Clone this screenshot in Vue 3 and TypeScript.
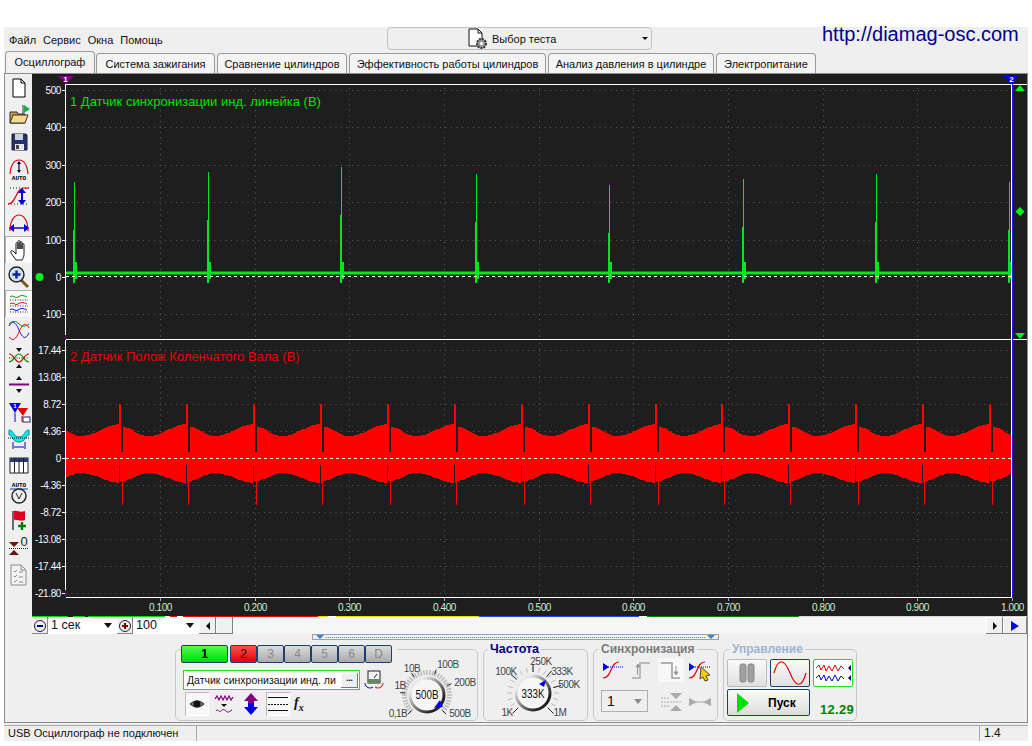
<template>
  <div class="window">
    <!-- верхняя строка -->
    <div class="top">
      <div class="menu">
        <span>Файл</span><span>Сервис</span><span>Окна</span><span>Помощь</span>
      </div>
      <div class="test-select">
        <svg class="doc-gear" width="22" height="22" viewBox="0 0 22 22">
          <path d="M2 1h9l4 4v13H2z" fill="#fff" stroke="#111" />
          <path d="M11 1v4h4" fill="none" stroke="#111" />
          <circle cx="14.5" cy="15.5" r="4.5" fill="#9a9a9a" stroke="#333" stroke-dasharray="2 1" stroke-width="2" />
          <circle cx="14.5" cy="15.5" r="1.6" fill="#fff" />
        </svg>
        <span>Выбор теста</span>
        <i class="arrow-down small"></i>
      </div>
      <a class="site">http://diamag-osc.com</a>
    </div>

    <!-- вкладки -->
    <div class="tabs">
      <div v-for="(t, i) in tabs" :key="t.name" class="tab" :class="{ active: i === 0 }" :style="{ width: t.w + 'px' }">
        {{ t.name }}
      </div>
    </div>

    <div class="main">
      <!-- левая панель -->
      <div class="toolbar">
        <div class="tool">
          <svg viewBox="0 0 24 24"><path d="M6 3h8l4 4v14H6z" fill="#fff" stroke="#000" /><path d="M14 3v4h4" fill="none" stroke="#000" /></svg>
        </div>
        <div class="tool">
          <svg viewBox="0 0 24 24">
            <path d="M3 9h7l1 2h7v9H3z" fill="#c8a040" stroke="#333" />
            <path d="M3 20l3-8h15l-3 8z" fill="#f4d98a" stroke="#333" />
            <path d="M16 11V2" stroke="#333" /><path d="M17 2l6 4-6 4z" fill="#16b04a" />
          </svg>
        </div>
        <div class="tool">
          <svg viewBox="0 0 24 24">
            <path d="M5 4h14l1 1v15H5z" fill="#27306e" stroke="#222" />
            <rect x="8" y="4" width="8" height="6" fill="#cfd3e0" />
            <rect x="8" y="14" width="9" height="6" fill="#e6e6e6" /><rect x="9" y="15" width="3" height="4" fill="#444" />
          </svg>
        </div>
        <div class="tool">
          <svg viewBox="0 0 24 24">
            <path d="M3 17C4 7 8 3 12 3s8 4 9 14" fill="none" stroke="#e00000" stroke-width="1.2" />
            <path d="M12 5v10" stroke="#000022" stroke-width="1.2" /><path d="M10 7l2-3 2 3zM10 13l2 3 2-3z" fill="#000030" />
            <text x="12" y="23" text-anchor="middle" class="icon-text">AUTO</text>
          </svg>
        </div>
        <div class="tool">
          <svg viewBox="0 0 24 24">
            <path d="M3 4h20M1 20h20" stroke="#222" stroke-dasharray="1 2" />
            <path d="M1 20c8 0 8-16 16-16h5" fill="none" stroke="#e00000" stroke-width="1.2" />
            <path d="M15 8v9" stroke="#0000d0" stroke-width="2" /><path d="M11 9l4-5 4 5zM11 16l4 5 4-5z" fill="#0000e0" />
          </svg>
        </div>
        <div class="tool">
          <svg viewBox="0 0 24 24">
            <path d="M3 20C3 10 7 4 12 4s9 6 9 16" fill="none" stroke="#e00000" stroke-width="1.2" />
            <path d="M5 17h14" stroke="#0000d0" stroke-width="1.5" /><path d="M7 13l-5 4 5 4zM17 13l5 4-5 4z" fill="#0000e0" />
          </svg>
        </div>
        <div class="tool on">
          <svg viewBox="0 0 24 24">
            <path d="M9 22l-5-7c-1-2 1-3 2-2l3 3V6c0-2 2-2 2 0v5V4c0-2 2-2 2 0v7-6c0-2 2-2 2 0v6-4c0-2 2-2 2 0v9c0 3-1 4-2 6z" fill="#fff" stroke="#000" stroke-width="0.900" />
          </svg>
        </div>
        <div class="tool">
          <svg viewBox="0 0 24 24">
            <path d="M14 15l7 7" stroke="#7a5a20" stroke-width="3" />
            <circle cx="9.5" cy="9.5" r="7.5" fill="#cfe2fa" stroke="#222" stroke-width="1.4" />
            <path d="M5.5 9.5h8M9.5 5.5v8" stroke="#1020a0" stroke-width="2.4" />
          </svg>
        </div>
        <div class="tool on">
          <svg viewBox="0 0 24 24" fill="none">
            <path d="M3 5c3-3 5 2 8 0s5-2 9 0" stroke="#00a000" />
            <path d="M3 8h18M3 14h18M3 20h18" stroke="#222" stroke-dasharray="1 1.5" />
            <path d="M3 12c3-3 5 2 8 0s5-2 9 0" stroke="#e00000" />
            <path d="M3 18c3-3 5 2 8 0s5-2 9 0" stroke="#0000e0" />
          </svg>
        </div>
        <div class="tool">
          <svg viewBox="0 0 24 24" fill="none">
            <path d="M2 7c4-7 7-3 10 4s6 11 10 3" stroke="#0000e0" />
            <path d="M2 18c4 5 7 2 10-5s6-11 10-4" stroke="#e00000" />
            <path d="M2 5c4-4 7-3 10 0s6 3 10 0" stroke="#009000" />
          </svg>
        </div>
        <div class="tool">
          <svg viewBox="0 0 24 24" fill="none">
            <path d="M9 2h6l-3 4zM9 22h6l-3-4z" fill="#111" />
            <path d="M2 12h20" stroke="#222" stroke-dasharray="1 1.5" />
            <path d="M2 8c5 0 6 8 10 8s5-8 10-8" stroke="#e00000" stroke-width="1.2" />
            <path d="M2 16c5 0 6-8 10-8s5 8 10 8" stroke="#009000" stroke-width="1.2" />
          </svg>
        </div>
        <div class="tool">
          <svg viewBox="0 0 24 24">
            <path d="M9 7h6l-3-4zM9 16h6l-3 4z" fill="#111" /><path d="M2 11.500h20" stroke="#800080" stroke-width="2" />
          </svg>
        </div>
        <div class="tool">
          <svg viewBox="0 0 24 24">
            <path d="M2 3h12l-6 10z" fill="#0000e0" /><path d="M8 13v9" stroke="#0000e0" />
            <path d="M10 8h11l-5 8z" fill="#e00000" /><path d="M15 16v6" stroke="#e00000" />
            <text x="8" y="8" text-anchor="middle" class="mini-num">1</text>
            <rect x="16" y="17" width="7" height="5" fill="#fff" stroke="#222080" />
          </svg>
        </div>
        <div class="tool">
          <svg viewBox="0 0 24 24" fill="none">
            <path d="M2 3c5 0 4 7 10 7s5-7 10-7v5c-4 0-3 7-10 7S6 8 2 8z" fill="#00f0f0" stroke="#009090" />
            <path d="M1 11h22" stroke="#111" stroke-dasharray="1 1" />
            <path d="M6 15v7M18 15v7" stroke="#0000c0" /><path d="M7 20h10" stroke="#0000c0" />
          </svg>
        </div>
        <div class="tool">
          <svg viewBox="0 0 24 24">
            <rect x="3" y="4" width="18" height="15" fill="#fff" stroke="#222" />
            <rect x="3" y="4" width="18" height="4" fill="#2c3a70" />
            <path d="M7.500 4v15M12 4v15M16.500 4v15" stroke="#222" />
          </svg>
        </div>
        <div class="tool">
          <svg viewBox="0 0 24 24" fill="none">
            <text x="12" y="6" text-anchor="middle" class="icon-text">AUTO</text>
            <path d="M3 8h18" stroke="#0040c0" />
            <circle cx="12" cy="15" r="7" fill="#eee" stroke="#222" stroke-width="1.4" />
            <path d="M9 12l3 6 3-6" stroke="#222" />
          </svg>
        </div>
        <div class="tool">
          <svg viewBox="0 0 24 24">
            <path d="M6 3v19" stroke="#111" stroke-width="1.2" />
            <path d="M7 3c4-1 5 2 11 0v9c-5 2-7-1-11 0z" fill="#e00020" />
            <path d="M11 18h8M15 14v8" stroke="#008000" stroke-width="2.4" />
          </svg>
        </div>
        <div class="tool">
          <svg viewBox="0 0 24 24">
            <path d="M2 7h10l-5 5zM2 20h10l-5-5z" fill="#701010" />
            <path d="M2 13.500h20" stroke="#222" stroke-dasharray="1 1" />
            <text x="17" y="11" text-anchor="middle" class="zero">0</text>
          </svg>
        </div>
        <div class="tool">
          <svg viewBox="0 0 24 24" fill="none">
            <path d="M4 3h10l5 5v15H4z" fill="#f2f2f2" stroke="#8c8c8c" />
            <path d="M14 3v5h5M7 9l1 1 2-2M7 14l1 1 2-2M7 19l1 1 2-2M12 10h4M12 15h4M12 20h4" stroke="#8c8c8c" />
          </svg>
        </div>
      </div>

      <div class="work">
        <!-- осциллограмма -->
        <svg class="plot" width="995" height="542" viewBox="32 74 995 542">
          <rect x="32" y="74" width="995" height="542" fill="#1e1e1e" />

          <g class="grid">
            <line v-for="y in topTicks" :key="'t' + y.y" x1="66" x2="1012" :y1="y.y" :y2="y.y" />
            <line v-for="y in bottomTicks" :key="'b' + y.y" x1="66" x2="1012" :y1="y.y" :y2="y.y" />
            <template v-for="x in timeTicks" :key="'v' + x.x">
              <line :x1="x.x" :x2="x.x" y1="88" y2="337" />
              <line :x1="x.x" :x2="x.x" y1="343" y2="596" />
            </template>
          </g>

          <!-- канал 1 -->
          <path d="M66 273H1012" stroke="#00e620" stroke-width="3" />
          <g v-for="s in greenSpikes" :key="s.x">
            <line :x1="s.x + 0.5" :x2="s.x + 0.5" :y1="s.top" y2="283" stroke="#00e620" />
            <line :x1="s.x" :x2="s.x" :y1="s.top + 48" y2="283" stroke="#00e620" stroke-width="2" />
            <line :x1="s.x + 2" :x2="s.x + 2" y1="262" y2="279" stroke="#00e620" stroke-width="2" />
          </g>
          <path d="M66 276.500H1012" stroke="#fff" stroke-dasharray="3 3" />

          <!-- канал 2 -->
          <path :d="redBody" fill="#ff0000" />
          <g v-for="x in redSpikes" :key="x">
            <rect :x="x + 1" y="404" width="2" height="48" fill="#1e1e1e" />
            <rect :x="x - 1" y="404" width="2" height="54" fill="#ff0000" />
            <rect :x="x - 1" y="465" width="1" height="20" fill="#1e1e1e" />
            <rect :x="even(x + 2)" y="458" width="1" height="47" fill="#ff0000" />
          </g>
          <path d="M66 458.500H1012" stroke="#fff" stroke-dasharray="3 3" />

          <!-- рамки -->
          <path d="M66 84.500H1027M66 339.500H1027M66 597.500H1012" stroke="#fff" />
          <path d="M65.500 84V597" stroke="#fff" />
          <path d="M65.500 335V340M65.500 590V597" stroke="#800080" />
          <path d="M1011.500 84V597" stroke="#fff" />
          <path d="M1012.500 84V597" stroke="#2020ff" />

          <!-- подписи осей -->
          <g v-for="y in [...topTicks, ...bottomTicks]" :key="'l' + y.y">
            <line x1="62" x2="65" :y1="y.y" :y2="y.y" stroke="#fff" />
            <text x="61" :y="y.y + 3.5" text-anchor="end" class="axis">{{ y.label }}</text>
          </g>
          <g v-for="x in timeTicks" :key="'x' + x.x">
            <line :x1="x.x" :x2="x.x" y1="598" y2="601" stroke="#aaa" />
            <text :x="x.x" y="611" text-anchor="middle" class="axis time">{{ x.label }}</text>
          </g>

          <text x="70" y="106" class="chan green">1 Датчик синхронизации инд. линейка (В)</text>
          <text x="70" y="361" class="chan red">2 Датчик Полож Коленчатого Вала (В)</text>

          <!-- маркеры -->
          <path d="M58 76h16l-8 8z" fill="#800080" />
          <text x="65.500" y="82" text-anchor="middle" class="marker">1</text>
          <path d="M1003 76h16l-8 8z" fill="#0000f0" />
          <text x="1011.500" y="82" text-anchor="middle" class="marker">2</text>
          <circle cx="39.500" cy="277" r="4" fill="#00f020" />
          <path d="M1015 91l5-6 5 6zM1015 333h10l-5 6zM1020 207l4.500 4.500-4.500 4.500-4.500-4.500z" fill="#00f020" />
        </svg>

        <!-- полоса под графиком -->
        <div class="strip">
          <span v-for="c in strip" :key="c.x" :style="{ width: c.w + 'px', background: c.c }"></span>
        </div>
        <div class="scrollrow">
          <button class="round-btn"><i class="minus"></i></button>
          <div class="combo w-68">1 сек<i class="arrow-down"></i></div>
          <button class="round-btn red"><i class="minus plus"></i></button>
          <div class="combo w-65">100<i class="arrow-down"></i></div>
          <button class="sbtn"><i class="arrow-left"></i></button>
          <button class="sbtn"></button>
          <div class="track"></div>
          <button class="sbtn"><i class="arrow-right"></i></button>
          <button class="sbtn blue"><i class="arrow-right blue-arrow"></i></button>
        </div>

        <div class="splitter"><i class="tri"></i><span></span><i class="tri"></i></div>

        <!-- нижние панели -->
        <div class="panels">
          <div class="panel channels">
            <div class="left-col">
              <div class="ch-row">
                <button
                  v-for="c in channels"
                  :key="c.n"
                  class="ch"
                  :class="c.cls"
                >{{ c.n }}</button>
              </div>
              <div class="ch-input-row">
                <div class="ch-input">
                  <span>Датчик синхронизации инд. ли</span>
                  <button class="dots">•••</button>
                </div>
                <svg width="20" height="20" viewBox="0 0 20 20" fill="none">
                  <rect x="4" y="1" width="12" height="12" fill="#f4f4f4" stroke="#222" />
                  <rect x="4" y="9" width="12" height="4" fill="#668866" />
                  <path d="M10 8l3-4" stroke="#222" />
                  <path d="M1 13c0 5 6 6 8 4" stroke="#0000d0" /><path d="M19 13c0 5-6 6-8 4" stroke="#e00000" />
                </svg>
              </div>
              <div class="ch-tools">
                <div class="mini on">
                  <svg width="20" height="20" viewBox="0 0 20 20">
                    <path d="M3 10c4-4 10-4 14 0-4 4-10 4-14 0z" fill="#777" stroke="#222" />
                    <circle cx="10" cy="10" r="3.500" fill="#111" />
                  </svg>
                </div>
                <div class="mini">
                  <svg width="20" height="20" viewBox="0 0 20 20" fill="none">
                    <path d="M1 5l2-3 2 4 2-4 2 4 2-4 2 4 2-4 2 4 2-3" stroke="#800080" stroke-width="1.2" />
                    <path d="M7 10h6l-3 3z" fill="#111" />
                    <path d="M2 17c2-3 3 2 5 0s3-2 5 0 3 1 6-1" stroke="#800080" />
                  </svg>
                </div>
                <div class="mini">
                  <svg width="20" height="24" viewBox="0 0 20 24">
                    <path d="M10 1l7 8h-4v5H7V9H3z" fill="#800080" />
                    <path d="M10 23l-7-8h4v-4h6v4h4z" fill="#0000e0" />
                  </svg>
                </div>
                <div class="mini on lines">
                  <svg width="20" height="20" viewBox="0 0 20 20">
                    <path d="M0 3.500h20M0 16.500h20" stroke="#111" /><path d="M0 10.500h20" stroke="#111" stroke-dasharray="2 1" />
                  </svg>
                </div>
                <div class="fx">f<sub>x</sub></div>
              </div>
            </div>
            <svg class="knob-v" width="95" height="60" viewBox="385 660 95 60">
              <line
                v-for="(t, i) in voltTicks"
                :key="i"
                :x1="t.x1" :y1="t.y1" :x2="t.x2" :y2="t.y2"
                stroke="#b8b8b8" stroke-width="1.5"
              />
              <line
                v-for="(t, i) in voltMajor"
                :key="'m' + i"
                :x1="t.x1" :y1="t.y1" :x2="t.x2" :y2="t.y2"
                stroke="#222"
              />
              <circle cx="427" cy="695" r="17" fill="#f6f6f6" stroke="url(#ring)" stroke-width="3" />
              <path d="M434 708l6-8 3 7z" fill="#0000e0" />
              <text x="427" y="699" text-anchor="middle" class="knob-val" textLength="23" lengthAdjust="spacingAndGlyphs">500В</text>
              <text v-for="l in voltLabels" :key="l.t" :x="l.x" :y="l.y" text-anchor="middle" class="knob-lab">{{ l.t }}</text>
              <defs>
                <linearGradient id="ring" x1="0" y1="0" x2="1" y2="1">
                  <stop offset="0.200" stop-color="#e8e8e8" />
                  <stop offset="0.800" stop-color="#222" />
                </linearGradient>
              </defs>
            </svg>
          </div>

          <div class="panel freq">
            <div class="title navy">Частота</div>
            <svg width="103" height="62" viewBox="484 658 103 62">
              <line
                v-for="(t, i) in freqTicks"
                :key="i"
                :x1="t.x1" :y1="t.y1" :x2="t.x2" :y2="t.y2"
                stroke="#b8b8b8"
              />
              <line
                v-for="(t, i) in freqMajor"
                :key="'m' + i"
                :x1="t.x1" :y1="t.y1" :x2="t.x2" :y2="t.y2"
                stroke="#222"
              />
              <circle cx="533" cy="694" r="17" fill="#f6f6f6" stroke="url(#ring)" stroke-width="3" />
              <path d="M539 685l7-4-2 7z" fill="#0000e0" />
              <text x="533" y="699" text-anchor="middle" class="knob-val" textLength="23" lengthAdjust="spacingAndGlyphs">333K</text>
              <text v-for="l in freqLabels" :key="l.t" :x="l.x" :y="l.y" text-anchor="middle" class="knob-lab">{{ l.t }}</text>
            </svg>
          </div>

          <div class="panel sync">
            <div class="title grey">Синхронизация</div>
            <div class="sync-row">
              <div class="sico">
                <svg width="26" height="24" viewBox="0 0 26 24" fill="none">
                  <path d="M3 20c9 0 7-16 16-16" stroke="#e00000" stroke-width="1.2" /><path d="M6 9h18" stroke="#0000e0" stroke-dasharray="1 1" /><path d="M3 5l6 4-6 4z" fill="#0000e0" />
                </svg>
              </div>
              <div class="sico">
                <svg width="26" height="24" viewBox="0 0 26 24" fill="none">
                  <path d="M3 20h8V5h10" stroke="#aaa" stroke-width="1.5" /><path d="M7 9l2-3 2 3zM8.500 9v8" fill="#999" stroke="#999" />
                </svg>
              </div>
              <div class="sico check">
                <svg width="26" height="24" viewBox="0 0 26 24" fill="none">
                  <path d="M3 5h11v15h8" stroke="#999" stroke-width="1.5" /><path d="M18 8v8M16 14l2 3 2-3z" fill="#999" stroke="#999" />
                </svg>
              </div>
              <div class="sico">
                <svg width="26" height="24" viewBox="0 0 26 24" fill="none">
                  <path d="M2 20c9 0 7-16 16-16" stroke="#e00000" stroke-width="1.2" /><path d="M6 9h18" stroke="#0000e0" stroke-dasharray="1 1" /><path d="M2 5l6 4-6 4z" fill="#0000e0" />
                  <path d="M14 9l9 8-4 1 2 4-3 1-2-4-3 2z" fill="#f0d000" stroke="#222" stroke-width="0.800" />
                </svg>
              </div>
            </div>
            <div class="sync-row second">
              <div class="sync-combo">1<i class="arrow-down grey-arrow"></i></div>
              <div class="sico">
                <svg width="26" height="24" viewBox="0 0 26 24" fill="none">
                  <path d="M12 3h12l-6 6zM12 21h12l-6-6z" fill="#aaa" /><path d="M3 12h20M3 8h8M3 16h8" stroke="#aaa" stroke-dasharray="2 1" />
                </svg>
              </div>
              <div class="sico">
                <svg width="26" height="24" viewBox="0 0 26 24">
                  <path d="M2 8l8 4-8 4zM24 8l-8 4 8 4z" fill="#aaa" /><path d="M2 12h22" stroke="#aaa" />
                </svg>
              </div>
            </div>
          </div>

          <div class="panel control">
            <div class="title blue-grey">Управление</div>
            <div class="ctrl-top">
              <button class="cbtn plain">
                <svg width="20" height="22" viewBox="0 0 20 22"><rect x="3" y="2" width="6" height="18" rx="2" fill="#a0a0a0" stroke="#888" /><rect x="11" y="2" width="6" height="18" rx="2" fill="#a0a0a0" stroke="#888" /></svg>
              </button>
              <button class="cbtn navy-b">
                <svg width="34" height="24" viewBox="0 0 34 24" fill="none"><path d="M1 12C5-3 11-3 17 12s12 15 16 0" stroke="#e00000" stroke-width="1.2" /></svg>
              </button>
              <button class="cbtn green-b">
                <svg width="36" height="24" viewBox="0 0 36 24" fill="none">
                  <path d="M1 7l3-3 2 5 3-5 2 6 3-5 3 5 3-6 3 6 3-5 3 3" stroke="#e00000" /><path d="M33 7l3-3v6z" fill="#000080" />
                  <path d="M1 17l3-3 2 5 3-5 2 6 3-5 3 5 3-6 3 6 3-5 3 3" stroke="#0000e0" /><path d="M33 17l3-3v6z" fill="#000080" />
                </svg>
              </button>
            </div>
            <div class="ctrl-bottom">
              <button class="start">
                <svg width="14" height="20" viewBox="0 0 14 20"><path d="M1 0l12 10-12 10z" fill="#00e000" /></svg>
                <span>Пуск</span>
              </button>
              <span class="value">12.29</span>
            </div>
          </div>
        </div>
      </div>
    </div>

    <!-- строка состояния -->
    <div class="status">
      <div class="cell first">USB Осциллограф не подключен</div>
      <div class="cell grow"></div>
      <div class="cell ver">1.4</div>
    </div>
  </div>
</template>

<script setup lang="ts">
interface Tick { x1: number; y1: number; x2: number; y2: number }

const tabs = [
  { name: "Осциллограф", w: 90 },
  { name: "Система зажигания", w: 119 },
  { name: "Сравнение цилиндров", w: 130 },
  { name: "Эффективность работы цилиндров", w: 197 },
  { name: "Анализ давления в цилиндре", w: 166 },
  { name: "Электропитание", w: 100 },
];

const channels = [
  { n: "1", cls: "c1" },
  { n: "2", cls: "c2" },
  { n: "3", cls: "" },
  { n: "4", cls: "" },
  { n: "5", cls: "" },
  { n: "6", cls: "" },
  { n: "D", cls: "" },
];

const topTicks = ["500", "400", "300", "200", "100", "0", "-100"].map((label, i) => ({
  label,
  y: Math.round(90 + i * 37.4) + 0.5,
}));
const bottomTicks = ["17.44", "13.08", "8.72", "4.36", "0", "-4.36", "-8.72", "-13.08", "-17.44", "-21.80"].map(
  (label, i) => ({ label, y: Math.round(350 + i * 27) + 0.5 })
);
const timeTicks = Array.from({ length: 10 }, (_, i) => ({
  label: ((i + 1) / 10).toFixed(3),
  x: Math.round(65.5 + (i + 1) * 94.65) + 0.5,
}));

const greenSpikes = [
  { x: 74, top: 182 },
  { x: 208, top: 172 },
  { x: 341, top: 167 },
  { x: 476, top: 174 },
  { x: 609, top: 185 },
  { x: 743, top: 179 },
  { x: 876, top: 174 },
  { x: 1009, top: 182 },
];

const redSpikes = [120, 187, 254, 321, 388, 455, 522, 589, 656, 722, 789, 856, 923, 990];

const even = (n: number): number => n - (n % 2);

// огибающая красного сигнала, между импульсами
const envelope = (x: number): number => {
  const marks = [53, ...redSpikes, 1057];
  let i = 0;
  while (marks[i + 1] <= x) i++;
  const t = (x - marks[i]) / (marks[i + 1] - marks[i]);
  if (t < 0.4) return 0.8 * (Math.cos((Math.PI * t) / 0.4) + 1) / 2;
  return (1 - Math.cos((Math.PI * (t - 0.4)) / 0.6)) / 2;
};

const buildRed = (): string => {
  let up = "M66 458";
  let down = "";
  for (let x = 66; x <= 1010; x += 2) {
    const v = envelope(x);
    up += `V${Math.round(436 - 12 * v)}h2`;
    down = `V${Math.round(473 + 10 * v)}h-2` + down;
  }
  return up + down + "Z";
};
const redBody = buildRed();

// цветная полоска под осью времени
const strip = [
  { x: 32, w: 36, c: "#00e000" },
  { x: 68, w: 5, c: "#111111" },
  { x: 73, w: 12, c: "#00e000" },
  { x: 85, w: 3, c: "#111111" },
  { x: 88, w: 77, c: "#00e000" },
  { x: 165, w: 5, c: "#ffffff" },
  { x: 170, w: 7, c: "#f00000" },
  { x: 177, w: 6, c: "#ffffff" },
  { x: 183, w: 135, c: "#f00000" },
  { x: 318, w: 10, c: "#e8e000" },
  { x: 328, w: 8, c: "#ffffff" },
  { x: 336, w: 143, c: "#e8e000" },
  { x: 479, w: 160, c: "#2050e0" },
  { x: 639, w: 8, c: "#ffffff" },
  { x: 647, w: 152, c: "#008000" },
  { x: 799, w: 228, c: "#d8d8d8" },
];

const polar = (cx: number, cy: number, deg: number, r1: number, r2: number): Tick => {
  const a = (deg * Math.PI) / 180;
  return {
    x1: cx + Math.sin(a) * r1,
    y1: cy - Math.cos(a) * r1,
    x2: cx + Math.sin(a) * r2,
    y2: cy - Math.cos(a) * r2,
  };
};

const voltTicks = Array.from({ length: 37 }, (_, i) => polar(427, 695, -135 + i * 7.5, 20, 25));
const voltMajor = [-135, -85, -35, 20, 65, 135].map((d) => polar(427, 695, d, 22, 27));
const voltLabels = [
  { t: "0,1В", x: 398, y: 717 },
  { t: "1В", x: 400, y: 689 },
  { t: "10В", x: 412, y: 672 },
  { t: "100В", x: 448, y: 668 },
  { t: "200В", x: 465, y: 686 },
  { t: "500В", x: 460, y: 717 },
];

const freqTicks = Array.from({ length: 19 }, (_, i) => polar(533, 694, -135 + i * 15, 21, 26));
const freqMajor = [-135, -50, 0, 40, 75, 135].map((d) => polar(533, 694, d, 21, 29));
const freqLabels = [
  { t: "100K", x: 506, y: 676 },
  { t: "250K", x: 541, y: 666 },
  { t: "333K", x: 562, y: 676 },
  { t: "500K", x: 569, y: 689 },
  { t: "1K", x: 507, y: 717 },
  { t: "1M", x: 560, y: 717 },
];
</script>

<style>
html,
body {
  margin: 0;
  background: #fff;
}
</style>

<style scoped>
.window {
  width: 1024px;
  height: 714px;
  margin: 27px 0 0 4px;
  background: #efefef;
  font-family: "Liberation Sans", Arial, sans-serif;
  font-size: 11px;
  color: #111;
  display: flex;
  flex-direction: column;
  box-sizing: border-box;
}

.top {
  height: 24px;
  display: flex;
  flex: none;
}

.menu {
  width: 383px;
  display: flex;
  gap: 7px;
  padding: 7px 0 0 5px;
  box-sizing: border-box;
}

.test-select {
  width: 265px;
  height: 23px;
  border: 1px solid #c0c0c0;
  border-radius: 4px;
  box-sizing: border-box;
  display: flex;
  align-items: center;
  position: relative;
  padding-left: 79px;
  gap: 3px;
}

.doc-gear {
  flex: none;
}

.site {
  margin: -5px 0 0 170px;
  font-size: 20px;
  line-height: 24px;
  color: #000090;
  white-space: nowrap;
}

.tabs {
  height: 22px;
  flex: none;
  display: flex;
  padding-left: 1px;
  gap: 2px;
  align-items: flex-end;
}

.tab {
  height: 20px;
  box-sizing: border-box;
  border: 1px solid #9a9a9a;
  border-bottom: none;
  border-radius: 4px 4px 0 0;
  background: #f4f4f4;
  text-align: center;
  line-height: 20px;
  white-space: nowrap;
}

.tab.active {
  height: 22px;
  margin-right: -1px;
  line-height: 20px;
  background: #f2f2f2;
  z-index: 1;
}

.main {
  height: 650px;
  flex: none;
  box-sizing: border-box;
  border: 1px solid #8c8c8c;
  display: flex;
}

.toolbar {
  width: 27px;
  flex: none;
  display: flex;
  flex-direction: column;
}

.tool {
  height: 27px;
  flex: none;
  display: flex;
  align-items: center;
  justify-content: center;
}

.tool svg {
  width: 24px;
  height: 24px;
}

.tool.on {
  background: #fbfbfb;
  box-shadow: inset 1px 1px 0 #b0b0b0;
}

.icon-text {
  font: bold 6px "Liberation Mono", monospace;
  fill: #000;
}

.mini-num {
  font: bold 6px "Liberation Sans", sans-serif;
  fill: #fff;
}

.zero {
  font: 13px "Liberation Sans", sans-serif;
  fill: #222;
}

.work {
  width: 995px;
  flex: none;
  display: flex;
  flex-direction: column;
  position: relative;
}

.plot {
  display: block;
  flex: none;
}

.grid line {
  stroke: #5c5c5c;
  stroke-dasharray: 1 4.500;
}

.axis {
  font: 10px "Liberation Sans", sans-serif;
  letter-spacing: -0.4px;
  fill: #f2f8ff;
}

.axis.time {
  fill: #c8f0d0;
}

.chan {
  font: 13px "Liberation Sans", sans-serif;
}

.chan.green {
  fill: #00e000;
}

.chan.red {
  fill: #e80000;
}

.marker {
  font: bold 8px "Liberation Sans", sans-serif;
  fill: #fff;
}

.strip {
  height: 1px;
  flex: none;
  display: flex;
}

.strip span {
  display: block;
  height: 1px;
}

.scrollrow {
  height: 17px;
  flex: none;
  display: flex;
  font-size: 14px;
}

.round-btn {
  width: 16px;
  height: 17px;
  padding: 0;
  border: none;
  background: #eee;
  box-shadow: inset -1px -1px 0 #888, inset 1px 1px 0 #fff;
  display: flex;
  align-items: center;
  justify-content: center;
}

.minus {
  width: 12px;
  height: 12px;
  border: 1px solid #222;
  border-radius: 50%;
  box-sizing: border-box;
  position: relative;
  display: block;
}

.minus::before {
  content: "";
  position: absolute;
  left: 2px;
  top: 4px;
  width: 6px;
  height: 2px;
  background: #000080;
}

.minus.plus::after {
  content: "";
  position: absolute;
  left: 4px;
  top: 2px;
  width: 2px;
  height: 6px;
  background: #800000;
}

.minus.plus::before {
  background: #800000;
}

.combo {
  background: #fff;
  height: 17px;
  line-height: 17px;
  box-sizing: border-box;
  padding-left: 3px;
  position: relative;
  font-size: 12.5px;
}

.w-68 {
  width: 69px;
}

.w-65 {
  width: 66px;
}

.arrow-down {
  position: absolute;
  right: 5px;
  top: 6px;
  width: 0;
  height: 0;
  border-left: 4px solid transparent;
  border-right: 4px solid transparent;
  border-top: 5px solid #111;
}

.arrow-down.small {
  right: 3px;
  top: 9px;
  border-left-width: 3px;
  border-right-width: 3px;
  border-top-width: 3px;
}

.grey-arrow {
  border-top-color: #8a8a8a;
  top: 8px;
}

.sbtn {
  width: 17px;
  height: 17px;
  padding: 0;
  border: none;
  background: #f0f0f0;
  box-shadow: inset -1px -1px 0 #808080, inset 1px 1px 0 #fff, inset 0 0 0 1px #bbb;
  display: flex;
  align-items: center;
  justify-content: center;
}

.sbtn.blue {
  width: 24px;
}

.arrow-left,
.arrow-right {
  width: 0;
  height: 0;
  border-top: 4px solid transparent;
  border-bottom: 4px solid transparent;
}

.arrow-left {
  border-right: 4px solid #111;
}

.arrow-right {
  border-left: 4px solid #111;
}

.blue-arrow {
  border-left: 8px solid #0000f0;
  border-top-width: 5px;
  border-bottom-width: 5px;
}

.track {
  flex: 1;
  background-color: #f6f6f6;
  background-image: radial-gradient(#e0e0e0 0.5px, transparent 0.6px);
  background-size: 2px 2px;
}

.splitter {
  width: 407px;
  height: 6px;
  margin: 0 0 0 280px;
  box-sizing: border-box;
  border: 1px solid #a0a0a0;
  flex: none;
  display: flex;
  align-items: center;
  padding: 0 3px;
  gap: 2px;
}

.splitter span {
  flex: 1;
  border-top: 1px dotted #4090f0;
}

.tri {
  width: 0;
  height: 0;
  border-left: 4px solid transparent;
  border-right: 4px solid transparent;
  border-top: 4px solid #3080f0;
}

.panels {
  display: flex;
  margin: 9px 0 0 143px;
  gap: 5px;
}

.panel {
  height: 72px;
  box-sizing: border-box;
  border: 1px solid #c8c8c8;
  border-radius: 5px;
  flex: none;
}

.channels {
  width: 303px;
  display: flex;
  padding-left: 5px;
}

.left-col {
  width: 204px;
  flex: none;
}

.ch-row {
  display: flex;
  width: 216px;
  height: 18px;
  margin-top: -5px;
  background: #efefef;
  gap: 0;
}

.ch {
  width: 27px;
  height: 18px;
  padding: 0;
  box-sizing: border-box;
  border: 1px solid #1c4070;
  border-radius: 2px;
  background: linear-gradient(#dcdcdc, #aaa);
  color: #888;
  font: 12px "Liberation Sans", sans-serif;
}

.ch.c1 {
  width: 47px;
  margin-right: 2px;
  background: linear-gradient(#50ff50, #00d800);
  color: #000;
  font-weight: bold;
}

.ch.c2 {
  background: linear-gradient(#ff5050, #e80000);
  color: #300;
}

.ch-input-row {
  display: flex;
  align-items: center;
  margin: 7px 0 0 2px;
  gap: 4px;
}

.ch-input {
  width: 177px;
  height: 20px;
  box-sizing: border-box;
  flex: none;
  border: 1px solid #20e020;
  background: #fff;
  display: flex;
  align-items: center;
  padding: 0 1px 0 3px;
  font-size: 10.5px;
  white-space: nowrap;
}

.ch-input span {
  flex: 1;
  min-width: 0;
}

.dots {
  width: 17px;
  height: 15px;
  flex: none;
  padding: 0;
  border: none;
  background: #eee;
  box-shadow: inset -1px -1px 0 #777, inset 1px 1px 0 #fff;
  font-size: 6px;
  color: #222;
}

.ch-tools {
  display: flex;
  align-items: center;
  margin: 2px 0 0 4px;
}

.mini {
  width: 24px;
  height: 24px;
  display: flex;
  align-items: center;
  justify-content: center;
  margin-right: 3px;
  flex: none;
}

.mini.on {
  background: #f8f8f8;
  box-shadow: inset 1px 1px 0 #bbb, inset -1px -1px 0 #fff;
}

.mini.lines {
  margin-right: 0;
}

.fx {
  margin-left: 4px;
  font: italic bold 14px "Liberation Serif", serif;
}

.fx sub {
  font-size: 10px;
}

.knob-v {
  margin-top: 10px;
  overflow: visible;
  flex: none;
}

.knob-val {
  font: 12px "Liberation Sans", sans-serif;
  fill: #111;
}

.knob-lab {
  font: 10px "Liberation Sans", sans-serif;
  letter-spacing: -0.5px;
  fill: #3c4650;
}

.title {
  width: fit-content;
  margin: -8px 0 0 6px;
  padding: 0 2px;
  background: #efefef;
  line-height: 15px;
  font-weight: bold;
}

.navy {
  color: #000080;
  font-size: 12.5px;
  margin-left: 4px;
}

.grey {
  color: #7c7c7c;
  font-size: 12px;
  margin-left: 5px;
}

.blue-grey {
  color: #a0b4d0;
  font-size: 12px;
}

.freq {
  width: 105px;
}

.freq svg {
  display: block;
}

.sync {
  width: 125px;
}

.sync-row {
  display: flex;
  align-items: center;
  padding-left: 6px;
  gap: 3px;
  margin-top: 1px;
}

.sync-row.second {
  margin-top: 8px;
  align-items: flex-start;
}

.sico {
  width: 26px;
  height: 24px;
  flex: none;
}

.sico.check {
  background-color: #f8f8f8;
}

.sync-combo {
  width: 47px;
  height: 22px;
  margin: 0 7px 0 1px;
  flex: none;
  box-sizing: border-box;
  border: 1px solid #b0b0b0;
  font-size: 14px;
  line-height: 20px;
  padding-left: 5px;
  position: relative;
}

.control {
  width: 134px;
  padding: 2px 0 0 3px;
}

.control .title {
  margin-top: -10px;
  margin-left: 3px;
}

.ctrl-top {
  display: flex;
  gap: 3px;
  margin-top: 2px;
}

.cbtn {
  width: 40px;
  height: 28px;
  padding: 0;
  box-sizing: border-box;
  border-radius: 2px;
  background: linear-gradient(#fafafa, #e0e0e0);
  display: flex;
  align-items: center;
  justify-content: center;
}

.plain {
  border: 1px solid #bbb;
}

.navy-b {
  border: 1px solid #1c4070;
}

.green-b {
  border: 1px solid #20e020;
  background: #fff;
}

.ctrl-bottom {
  display: flex;
  align-items: flex-end;
  margin-top: 2px;
}

.start {
  width: 83px;
  height: 27px;
  padding: 0 0 0 8px;
  box-sizing: border-box;
  border: 1px solid #1c4070;
  border-radius: 2px;
  background: linear-gradient(#fafafa, #dcdcdc);
  display: flex;
  align-items: center;
  font: bold 12px "Liberation Sans", sans-serif;
}

.start span {
  margin-left: 18px;
}

.value {
  margin: 0 0 -1px 10px;
  font-size: 13px;
  font-weight: bold;
  color: #008000;
  letter-spacing: 0.3px;
}

.status {
  margin-top: 2px;
  height: 16px;
  flex: none;
  display: flex;
  border-top: 1px solid #a8a8a8;
}

.cell {
  box-sizing: border-box;
  height: 15px;
  line-height: 15px;
  padding-left: 4px;
  white-space: nowrap;
}

.cell.first {
  width: 192px;
}

.cell.grow {
  width: 783px;
  border-left: 1px solid #a8a8a8;
}

.cell.ver {
  flex: 1;
  border-left: 1px solid #a8a8a8;
  font-size: 12px;
}
</style>
